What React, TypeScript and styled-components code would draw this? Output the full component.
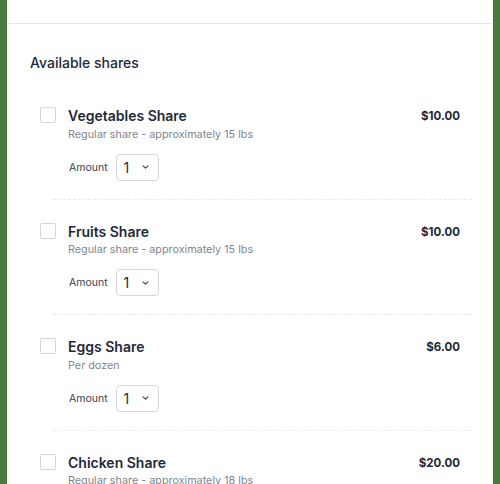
import React from 'react';
import styled, { createGlobalStyle } from 'styled-components';

interface Share {
  id: string;
  name: string;
  description: string;
  price: string;
}

const shares: Share[] = [
  { id: 'veg', name: 'Vegetables Share', description: 'Regular share - approximately 15 lbs', price: '$10.00' },
  { id: 'fruit', name: 'Fruits Share', description: 'Regular share - approximately 15 lbs', price: '$10.00' },
  { id: 'eggs', name: 'Eggs Share', description: 'Per dozen', price: '$6.00' },
  { id: 'chicken', name: 'Chicken Share', description: 'Regular share - approximately 18 lbs', price: '$20.00' },
];

const GlobalStyle = createGlobalStyle`
  html, body {
    margin: 0;
    padding: 0;
    background: #4a7a3d;
    height: 100%;
    overflow: hidden;
  }
  body {
    font-family: Inter, 'Noto Sans', sans-serif;
    -webkit-font-smoothing: antialiased;
  }
`;

const Panel = styled.div`
  margin: 0 7px;
  min-height: 484px;
  background: #ffffff;
`;

const TopBar = styled.div`
  height: 23px;
  border-bottom: 1px solid #e5e7eb;
`;

const Section = styled.section`
  padding: 29px 21px 0 23px;
`;

const Heading = styled.h2`
  margin: 0 0 11px 0;
  font-size: 14px;
  line-height: 20px;
  font-weight: 500;
  color: #1f2937;
`;

const Item = styled.div`
  padding: 23px 12px 18px 10px;
  display: grid;
  grid-template-columns: 16px 1fr auto;
  column-gap: 12px;
  align-items: start;
`;

const Divider = styled.div`
  margin-left: 23px;
  border-bottom: 1px dashed #e8eaed;
`;

const Checkbox = styled.span`
  display: block;
  width: 14px;
  height: 14px;
  border: 1px solid #d4d7dc;
  border-radius: 2px;
  background: #fff;
`;

const Details = styled.div`
  display: flex;
  flex-direction: column;
`;

const Name = styled.div`
  font-size: 14px;
  line-height: 18px;
  font-weight: 600;
  color: #1f2937;
`;

const Description = styled.div`
  margin-top: 0.5px;
  font-size: 10.8px;
  line-height: 18px;
  color: #80868f;
`;

const AmountRow = styled.div`
  margin-top: 10px;
  display: flex;
  align-items: center;
  gap: 8px;
  padding-left: 1px;
`;

const AmountLabel = styled.span`
  font-size: 10.5px;
  color: #374151;
`;

const Select = styled.div`
  box-sizing: border-box;
  width: 43px;
  height: 27px;
  border: 1px solid #d4d7dc;
  border-radius: 4px;
  display: flex;
  align-items: center;
  justify-content: space-between;
  padding: 0 9px 0 7px;
  font-size: 14px;
  color: #1f2937;
`;

const Price = styled.div`
  font-size: 11.5px;
  line-height: 18px;
  font-weight: 700;
  color: #1f2937;
`;

const Chevron = () => (
  <svg width="7" height="4" viewBox="0 0 7 4" fill="none">
    <path d="M1 0.8l2.5 2.4 2.5-2.4" stroke="#374151" strokeWidth="1.1" strokeLinecap="round" strokeLinejoin="round" />
  </svg>
);

export default function App() {
  return (
    <>
      <GlobalStyle />
      <Panel>
        <TopBar />
        <Section>
          <Heading>Available shares</Heading>
          {shares.map((share) => (
            <div key={share.id}>
              <Item>
                <Checkbox />
                <Details>
                  <Name>{share.name}</Name>
                  <Description>{share.description}</Description>
                  <AmountRow>
                    <AmountLabel>Amount</AmountLabel>
                    <Select>
                      <span>1</span>
                      <Chevron />
                    </Select>
                  </AmountRow>
                </Details>
                <Price>{share.price}</Price>
              </Item>
              <Divider />
            </div>
          ))}
        </Section>
      </Panel>
    </>
  );
}
